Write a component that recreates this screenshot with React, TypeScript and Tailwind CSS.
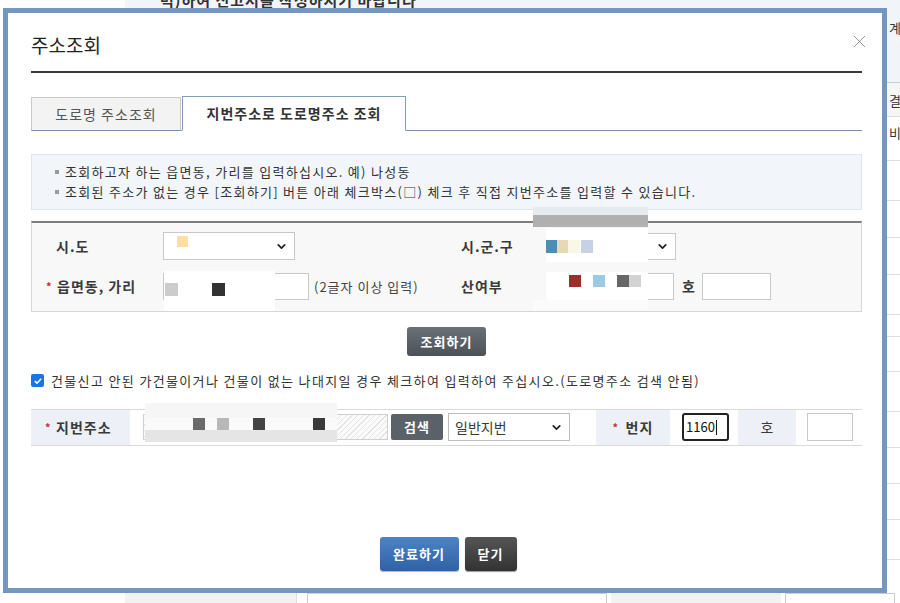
import { ChevronDown, X } from "lucide-react";

const FONT = "font-['Noto_Sans_CJK_KR','Noto_Sans',sans-serif]";

function Chevron({ className = "" }: { className?: string }) {
  return <ChevronDown size={13} strokeWidth={3.2} className={`text-[#222] ${className}`} />;
}

function Star() {
  return <span className="text-[#c8302a] text-[11px] w-[11px] leading-none">*</span>;
}

export default function App() {
  return (
    <div className={`relative w-[900px] h-[603px] overflow-hidden bg-white ${FONT}`}>
      {/* ================= PAGE BEHIND ================= */}
      <div className="pl-[125px]">
        <div className="h-[82px] bg-[#f1f5f9] overflow-hidden">
          <p className="-mt-[9px] pl-[35px] text-[15px] font-bold leading-[18px] text-[#333] tracking-[1px]">
            력)하여 신고서를 작성하시기 바랍니다
          </p>
          <p className="mt-[9px] pl-[764px] text-[13px] text-[#333] whitespace-nowrap">계류</p>
        </div>
        <div className="flex flex-col text-[13px] text-[#333]">
          <div className="h-[34px] border-t border-[#ccc] bg-[#f6f6f6] pl-[764px] pt-[8px] whitespace-nowrap">결과</div>
          <div className="h-[44px] border-t border-[#ddd] pl-[764px] pt-[6px] whitespace-nowrap">비고</div>
          {[40, 37, 37, 40, 22, 35, 40, 36, 36, 36, 40, 40].map((h, i) => (
            <div key={i} style={{ height: h }} className="border-t border-[#ddd]" />
          ))}
        </div>
      </div>
      <div className="absolute left-[125px] top-[593px] flex w-[775px] h-[10px]">
        <div className="w-[172px] bg-[#f2f2f2] border-r border-[#ddd]" />
        <div className="ml-[10px] w-[300px] border-x border-t border-[#ccc]" />
        <div className="ml-[4px] w-[170px] bg-[#f2f2f2]" />
        <div className="ml-[4px] w-[110px] border-x border-t border-[#ccc]" />
      </div>

      {/* ================= MODAL ================= */}
      <div className="absolute left-[3px] top-[8px] w-[884px] h-[585px] border-[5px] border-[#7596bf] bg-white pl-[23px] pr-[20px]">
        <div className="flex items-start justify-between pt-[19px]">
          <h1 className="text-[19px] leading-[26px] text-[#222]">주소조회</h1>
          <X size={21} strokeWidth={1} className="mt-[-1px] mr-[-8px] text-[#888]" />
        </div>
        <div className="mt-[13px] h-[2px] bg-[#3a3a3a]" />

        {/* tabs */}
        <div className="mt-[23px] flex items-end border-b border-[#7492b0]">
          <div className="w-[150px] h-[34px] -mb-px flex items-center justify-center border border-[#c9c9c9] border-b-[#7492b0] bg-[#f3f3f3] text-[14px] text-[#555] tracking-[1px]">
            도로명 주소조회
          </div>
          <div className="ml-px w-[224px] h-[35px] -mb-px flex items-center justify-center border border-[#7f9cbb] border-b-white bg-white text-[14px] font-bold text-[#333] tracking-[1px]">
            지번주소로 도로명주소 조회
          </div>
        </div>

        {/* info */}
        <div className="mt-[23px] h-[56px] border border-[#dfe5ec] bg-[#f2f6fa] pl-[23px] pt-[7px] text-[13px] leading-[20px] text-[#333] tracking-[1.3px]">
          <p className="flex items-center gap-[6px]">
            <span className="inline-block w-[4px] h-[4px] bg-[#999]" />
            조회하고자 하는 읍면동, 가리를 입력하십시오. 예) 나성동
          </p>
          <p className="flex items-center gap-[6px]">
            <span className="inline-block w-[4px] h-[4px] bg-[#999]" />
            조회된 주소가 없는 경우 [조회하기] 버튼 아래 체크박스(□) 체크 후 직접 지번주소를 입력할 수 있습니다.
          </p>
        </div>

        {/* form */}
        <div className="mt-[11px] border border-[#d6d6d6] border-t-2 border-t-[#7d7d7d] bg-[#f8f8f8] pt-[9px] pb-[11px] text-[14px] text-[#3a3a3a]">
          <div className="flex items-center h-[28px]">
            <div className="w-[429px] flex items-center">
              <span className="w-[131px] pl-[24px] font-bold tracking-[1px]">시.도</span>
              <div className="w-[132px] h-[28px] bg-white border border-[#c8c8c8] flex items-center justify-end pr-[6px]">
                <Chevron />
              </div>
            </div>
            <span className="w-[86px] font-bold tracking-[1px]">시.군.구</span>
            <div className="w-[129px] h-[27px] bg-white border border-[#c8c8c8] flex items-center justify-end pr-[6px]">
              <Chevron />
            </div>
          </div>
          <div className="mt-[13px] flex items-center h-[27px]">
            <div className="w-[429px] flex items-center">
              <span className="w-[131px] pl-[14px] flex items-center font-bold tracking-[1px]">
                <Star />
                읍면동, 가리
              </span>
              <div className="w-[146px] h-[27px] bg-white border border-[#c8c8c8]" />
              <span className="ml-[5px] text-[13px] text-[#444] tracking-[1px]">(2글자 이상 입력)</span>
            </div>
            <span className="w-[86px] font-bold tracking-[1px]">산여부</span>
            <div className="w-[127px] h-[27px] bg-white border border-[#c8c8c8]" />
            <span className="ml-[8px] font-bold">호</span>
            <div className="ml-[7px] w-[69px] h-[27px] bg-white border border-[#c8c8c8]" />
          </div>
        </div>

        <div className="mt-[15px] flex justify-center">
          <button className="w-[79px] h-[29px] rounded-[3px] bg-gradient-to-b from-[#6b7077] to-[#4d5258] text-[13px] font-bold text-white tracking-[1px]">
            조회하기
          </button>
        </div>

        {/* checkbox */}
        <div className="mt-[15px] flex items-center text-[13px] text-[#333] tracking-[1.35px]">
          <span className="w-[13px] h-[13px] rounded-[2px] bg-[#1b73e8] flex items-center justify-center">
            <svg viewBox="0 0 12 12" className="w-[10px] h-[10px]">
              <path d="M2.2 6.2 L4.8 8.6 L9.8 3.2" fill="none" stroke="white" strokeWidth="1.8" />
            </svg>
          </span>
          <span className="ml-[7px]">건물신고 안된 가건물이거나 건물이 없는 나대지일 경우 체크하여 입력하여 주십시오.(도로명주소 검색 안됨)</span>
        </div>

        {/* jibun row */}
        <div className="mt-[18px] flex items-center h-[37px] border-y border-[#dadada] text-[14px] text-[#3a3a3a]">
          <div className="w-[99px] h-full bg-[#edf1f7] flex items-center pl-[14px] font-bold tracking-[1px]">
            <Star />
            지번주소
          </div>
          <div className="ml-[13px] w-[245px] h-[26px] border border-[#cfcfcf] bg-[repeating-linear-gradient(135deg,#fbfbfb_0px,#fbfbfb_3px,#e3e3e3_3px,#e3e3e3_4px)]" />
          <button className="ml-[3px] w-[52px] h-[26px] rounded-[2px] bg-[#5b6168] text-[13px] font-bold text-white tracking-[1px]">
            검색
          </button>
          <div className="ml-[5px] w-[122px] h-[28px] bg-white border border-[#bdbdbd] flex items-center justify-between pl-[6px] pr-[6px]">
            <span>일반지번</span>
            <Chevron />
          </div>
          <div className="ml-[26px] w-[74px] h-full bg-[#edf1f7] flex items-center justify-center font-bold tracking-[1px]">
            <Star />
            <span className="ml-[2px]">번지</span>
          </div>
          <div className="ml-[12px] w-[47px] h-[28px] bg-white border-2 border-[#222] rounded-[3px] flex items-center pl-[2px] text-[13px] text-[#111]">
            1160<span className="ml-px w-px h-[15px] bg-[#111]" />
          </div>
          <div className="ml-[9px] w-[58px] h-full bg-[#edf1f7] flex items-center justify-center">호</div>
          <div className="ml-[11px] w-[46px] h-[28px] bg-white border border-[#c8c8c8]" />
        </div>

        {/* footer buttons */}
        <div className="mt-[91px] flex justify-center gap-[6px] pl-[3px]">
          <button className="w-[79px] h-[34px] rounded-[3px] bg-gradient-to-b from-[#4d84c6] to-[#2d62a4] text-[13px] font-bold text-white tracking-[1px] shadow-[0_1px_1px_rgba(0,0,0,0.3)]">
            완료하기
          </button>
          <button className="w-[52px] h-[34px] rounded-[3px] bg-gradient-to-b from-[#555] to-[#333] text-[13px] font-bold text-white tracking-[1px] shadow-[0_1px_1px_rgba(0,0,0,0.4)]">
            닫기
          </button>
        </div>
      </div>

      {/* ================= MOSAIC (privacy cover) ================= */}
      <div className="absolute left-[533px] top-[207px] w-[115px] h-[8px] bg-[#e6ebf0]" />
      <div className="absolute left-[533px] top-[215px] w-[115px] h-[12px] bg-[#b0b0b0]" />
      <div className="absolute left-[546px] top-[228px] w-[102px] h-[34px] bg-white" />
      <div className="absolute left-[546px] top-[240px] w-[11px] h-[13px] bg-[#4a8db5]" />
      <div className="absolute left-[557px] top-[240px] w-[11px] h-[13px] bg-[#e8d9b5]" />
      <div className="absolute left-[568px] top-[240px] w-[12px] h-[13px] bg-[#f9f8e6]" />
      <div className="absolute left-[581px] top-[240px] w-[12px] h-[13px] bg-[#c6d0e6]" />
      <div className="absolute left-[546px] top-[272px] w-[102px] h-[28px] bg-white" />
      <div className="absolute left-[533px] top-[300px] w-[115px] h-[11px] bg-[#fbfbfb]" />
      <div className="absolute left-[569px] top-[275px] w-[12px] h-[12px] bg-[#9a302c]" />
      <div className="absolute left-[593px] top-[275px] w-[12px] h-[12px] bg-[#9ccae2]" />
      <div className="absolute left-[617px] top-[275px] w-[12px] h-[12px] bg-[#666]" />
      <div className="absolute left-[629px] top-[275px] w-[12px] h-[12px] bg-[#d2d2d2]" />

      <div className="absolute left-[177px] top-[236px] w-[11px] h-[11px] bg-[#fddfa6]" />
      <div className="absolute left-[164px] top-[271px] w-[111px] h-[40px] bg-white" />
      <div className="absolute left-[165px] top-[283px] w-[13px] h-[13px] bg-[#cccccc]" />
      <div className="absolute left-[212px] top-[283px] w-[13px] h-[13px] bg-[#333]" />

      <div className="absolute left-[145px] top-[403px] w-[192px] h-[15px] bg-[#f6f6f6]" />
      <div className="absolute left-[145px] top-[418px] w-[192px] h-[12px] bg-[#fafafa]" />
      <div className="absolute left-[145px] top-[430px] w-[192px] h-[12px] bg-[#e5e5e5]" />
      <div className="absolute left-[193px] top-[418px] w-[12px] h-[12px] bg-[#6a6a6a]" />
      <div className="absolute left-[217px] top-[418px] w-[12px] h-[12px] bg-[#b8b8b8]" />
      <div className="absolute left-[253px] top-[418px] w-[12px] h-[12px] bg-[#444]" />
      <div className="absolute left-[313px] top-[418px] w-[12px] h-[12px] bg-[#3a3a3a]" />
    </div>
  );
}
